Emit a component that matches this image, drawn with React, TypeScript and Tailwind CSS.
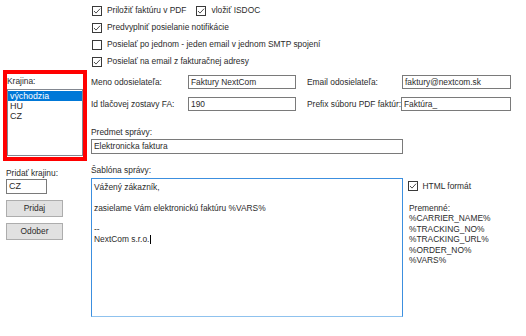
function Check({ checked = false }: { checked?: boolean }) {
  return (
    <svg width="10" height="10" viewBox="0 0 10 10" className="shrink-0">
      <rect x="0.5" y="0.5" width="9" height="9" fill="#fff" stroke="#3a3a3a" />
      {checked && (
        <path d="M2 5 L4 7.1 L8.1 2.7" fill="none" stroke="#3a3a3a" strokeWidth="0.9" />
      )}
    </svg>
  )
}

function CheckRow({ label, checked }: { label: string; checked?: boolean }) {
  return (
    <div className="flex items-center gap-[5px] whitespace-nowrap">
      <Check checked={checked} />
      <span>{label}</span>
    </div>
  )
}

function TextBox({ value, className = '' }: { value: string; className?: string }) {
  return (
    <div
      className={`flex items-center bg-white border border-[#7a7a7a] pl-[2px] whitespace-nowrap overflow-hidden ${className}`}
    >
      {value}
    </div>
  )
}

const variables = ['%CARRIER_NAME%', '%TRACKING_NO%', '%TRACKING_URL%', '%ORDER_NO%', '%VARS%']

export default function App() {
  return (
    <div className="w-[526px] h-[336px] overflow-hidden bg-white text-[#2b2b2b] text-[8.4px] leading-none font-['Liberation_Sans',Arial,sans-serif]">
      {/* top options */}
      <div className="flex flex-col pt-[2px] pl-[92px]">
        <div className="h-[17px] flex items-center">
          <CheckRow label="Priložiť faktúru v PDF" checked />
          <div className="ml-[10px]">
            <CheckRow label="vložiť ISDOC" checked />
          </div>
        </div>
        <div className="h-[17px] flex items-center">
          <CheckRow label="Predvyplniť posielanie notifikácie" checked />
        </div>
        <div className="h-[17px] flex items-center">
          <CheckRow label="Posielať po jednom - jeden email v jednom SMTP spojení" />
        </div>
        <div className="h-[17px] flex items-center">
          <CheckRow label="Posielať na email z fakturačnej adresy" checked />
        </div>
      </div>

      <div className="flex">
        {/* countries */}
        <div className="w-[91px] shrink-0 pl-[3px]">
          <div className="w-[84px] h-[91px] border-[4px] border-[#ff0000] flex flex-col">
            <div className="h-[15px] flex items-center">Krajina:</div>
            <div className="h-[67px] border border-[#828790] bg-white pt-[1px]">
              <div className="h-[10px] flex items-center bg-[#0078d7] text-white pl-[2px] text-[8.8px]">východzia</div>
              <div className="h-[10px] flex items-center pl-[2px] text-[9px]">HU</div>
              <div className="h-[10px] flex items-center pl-[2px] text-[9px]">CZ</div>
            </div>
          </div>
          <div className="pl-[3px]">
            <div className="mt-[6px] h-[12px] flex items-center whitespace-nowrap">Pridať krajinu:</div>
            <TextBox value="CZ" className="w-[41px] h-[15px] text-[9px]" />
            <button className="mt-[6px] w-[57px] h-[17px] flex items-center justify-center bg-[#e1e1e1] border border-[#adadad]">
              Pridaj
            </button>
            <button className="mt-[5.5px] w-[57px] h-[17px] flex items-center justify-center bg-[#e1e1e1] border border-[#adadad]">
              Odober
            </button>
          </div>
        </div>

        {/* message settings */}
        <div className="flex-1 flex flex-col">
          <div className="mt-[5px] h-[14px] flex items-center whitespace-nowrap">
            <div className="w-[97px]">Meno odosielateľa:</div>
            <TextBox value="Faktury NextCom" className="w-[108px] h-[14px]" />
            <div className="ml-[11px] w-[95px]">Email odosielateľa:</div>
            <TextBox value="faktury@nextcom.sk" className="w-[109px] h-[14px]" />
          </div>
          <div className="mt-[8px] h-[14px] flex items-center whitespace-nowrap">
            <div className="w-[97px]">Id tlačovej zostavy FA:</div>
            <TextBox value="190" className="w-[108px] h-[14px]" />
            <div className="ml-[11px] w-[94px]">Prefix súboru PDF faktúr:</div>
            <TextBox value="Faktúra_" className="w-[110px] h-[14px]" />
          </div>

          <div className="mt-[15px] h-[12px] flex items-center">Predmet správy:</div>
          <TextBox value="Elektronicka faktura" className="mt-[1px] w-[312px] h-[15px]" />

          <div className="mt-[10px] h-[12px] flex items-center">Šablóna správy:</div>
          <div className="mt-[2px] flex">
            <div className="w-[312px] h-[139px] border border-[#3c8fdf] border-b-[#8fc2ee] bg-white pl-[2px] pt-[2.5px] leading-[10.5px]">
              <div>Vážený zákazník,</div>
              <div>&nbsp;</div>
              <div>zasielame Vám elektronickú faktúru %VARS%</div>
              <div>&nbsp;</div>
              <div>--</div>
              <div className="flex items-center">
                NextCom s.r.o.
                <span className="ml-[1px] inline-block w-px h-[9px] bg-black" />
              </div>
            </div>
            <div className="ml-[4.5px] flex flex-col">
              <div className="mt-[2px] h-[12px] flex items-center">
                <CheckRow label="HTML formát" checked />
              </div>
              <div className="mt-[11px] leading-[10.4px] pl-[1.5px]">
                <div>Premenné:</div>
                {variables.map((v) => (
                  <div key={v}>{v}</div>
                ))}
              </div>
            </div>
          </div>
        </div>
      </div>
    </div>
  )
}
